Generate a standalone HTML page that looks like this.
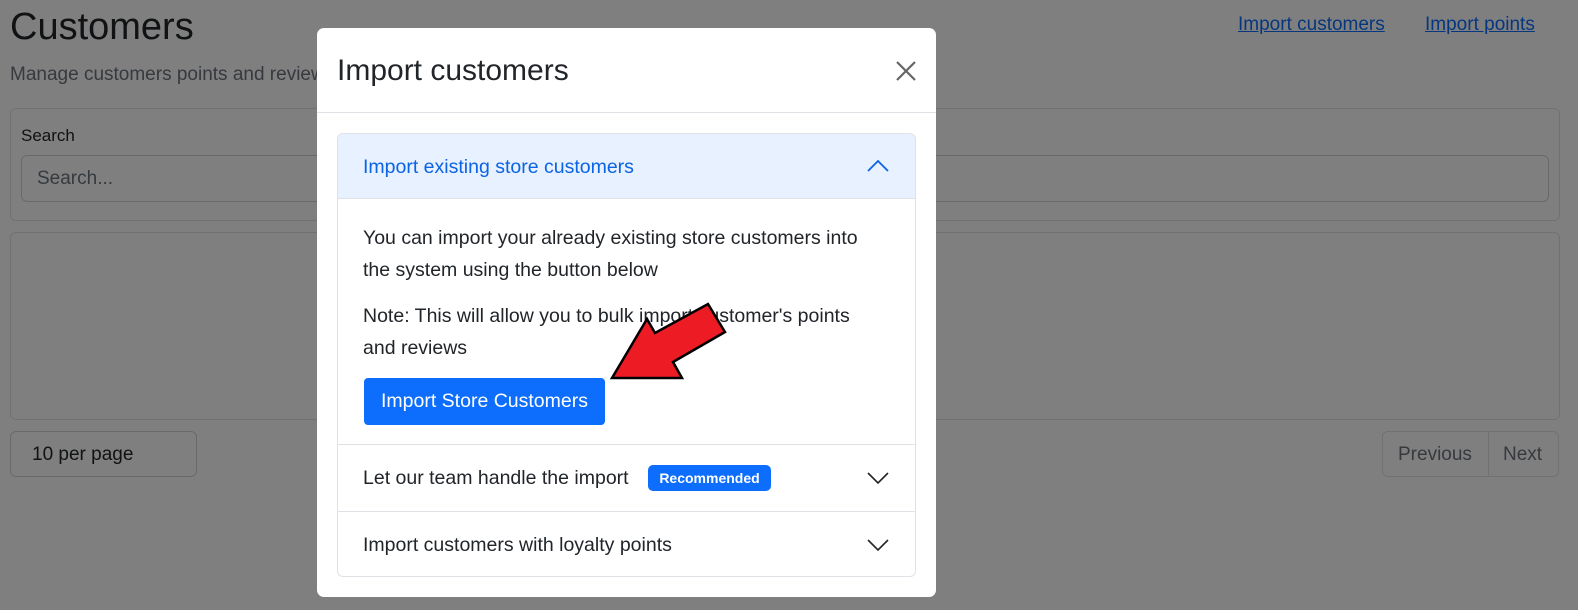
<!DOCTYPE html>
<html><head><meta charset="utf-8"><style>
*{box-sizing:border-box;margin:0;padding:0}
body{width:1578px;height:610px;overflow:hidden;background:#fff;font-family:"Liberation Sans",sans-serif;position:relative;color:#212529}
.a{position:absolute;white-space:nowrap}
.bd{position:absolute;left:0;top:0;width:1578px;height:610px;background:rgba(0,0,0,.5)}
.link{color:#0d6efd;text-decoration:underline;font-size:19px}
.box{border:1px solid #dee2e6;border-radius:6px}
</style></head><body>
<div class="a" style="left:10px;top:6px;font-size:38px;color:#212529">Customers</div>
<div class="a" style="left:10px;top:64px;font-size:19px;color:#6c757d">Manage customers points and reviews</div>
<div class="a link" style="left:1238px;top:14px">Import customers</div>
<div class="a link" style="left:1425px;top:14px">Import points</div>
<div class="a box" style="left:10px;top:108px;width:1550px;height:113px"></div>
<div class="a" style="left:21px;top:126px;font-size:17px">Search</div>
<div class="a box" style="left:21px;top:155px;width:1528px;height:47px;border-color:#ced4da"></div>
<div class="a" style="left:37px;top:168px;font-size:19px;color:#6c757d">Search...</div>
<div class="a box" style="left:10px;top:232px;width:1550px;height:188px"></div>
<div class="a box" style="left:10px;top:431px;width:187px;height:46px;border-color:#ced4da"></div>
<div class="a" style="left:32px;top:444px;font-size:19px">10 per page</div>
<div class="a box" style="left:1382px;top:431px;width:177px;height:46px"></div>
<div class="a" style="left:1488px;top:431px;width:1px;height:46px;background:#dee2e6"></div>
<div class="a" style="left:1398px;top:444px;font-size:19px;color:#6c757d">Previous</div>
<div class="a" style="left:1503px;top:444px;font-size:19px;color:#6c757d">Next</div>
<div class="bd"></div>

<div class="a" style="left:317px;top:28px;width:619px;height:569px;background:#fff;border-radius:7px">
 <div class="a" style="left:20px;top:26px;font-size:30px">Import customers</div>
 <svg class="a" style="left:578px;top:32px" width="22" height="22" viewBox="0 0 22 22"><path d="M2 2L20 20M20 2L2 20" stroke="#666" stroke-width="2.2"/></svg>
 <div class="a" style="left:0;top:84px;width:619px;height:1px;background:#dee2e6"></div>
 <div class="a box" style="left:20px;top:105px;width:579px;height:444px;border-radius:6px;overflow:hidden">
  <div class="a" style="left:0;top:0;width:579px;height:65px;background:#e7f1ff;border-bottom:1px solid #dee2e6"></div>
  <div class="a" style="left:25px;top:22px;font-size:19.5px;color:#0c63e4">Import existing store customers</div>
  <svg class="a" style="left:529px;top:25px" width="22" height="14"><path d="M1 12L11 2L21 12" stroke="#0c63e4" stroke-width="1.8" fill="none"/></svg>
  <div class="a" style="left:25px;top:88px;font-size:19.5px;line-height:32px">You can import your already existing store customers into<br>the system using the button below</div>
  <div class="a" style="left:25px;top:166px;font-size:19.5px;line-height:32px">Note: This will allow you to bulk import customer's points<br>and reviews</div>
  <div class="a" style="left:26px;top:244px;width:241px;height:47px;background:#0d6efd;border-radius:4px;color:#fff;font-size:19.5px;text-align:center;line-height:47px">Import Store Customers</div>
  <div class="a" style="left:0;top:310px;width:579px;height:1px;background:#dee2e6"></div>
  <div class="a" style="left:25px;top:333px;font-size:19.5px">Let our team handle the import</div>
  <div class="a" style="left:310px;top:331px;width:123px;height:26px;background:#0d6efd;border-radius:5px;color:#fff;font-size:14px;font-weight:bold;text-align:center;line-height:26px">Recommended</div>
  <svg class="a" style="left:529px;top:337px" width="22" height="14"><path d="M1 2L11 12L21 2" stroke="#212529" stroke-width="1.6" fill="none"/></svg>
  <div class="a" style="left:0;top:377px;width:579px;height:1px;background:#dee2e6"></div>
  <div class="a" style="left:25px;top:400px;font-size:19.5px">Import customers with loyalty points</div>
  <svg class="a" style="left:529px;top:404px" width="22" height="14"><path d="M1 2L11 12L21 2" stroke="#212529" stroke-width="1.6" fill="none"/></svg>
 </div>
</div>
<svg class="a" style="left:0;top:0" width="1578" height="610"><polygon points="612,378 647,319 655,333 708,304 725,332 673,362 682,378" fill="#ed1c24" stroke="#000" stroke-width="2.5" stroke-linejoin="miter"/></svg>
</body></html>
